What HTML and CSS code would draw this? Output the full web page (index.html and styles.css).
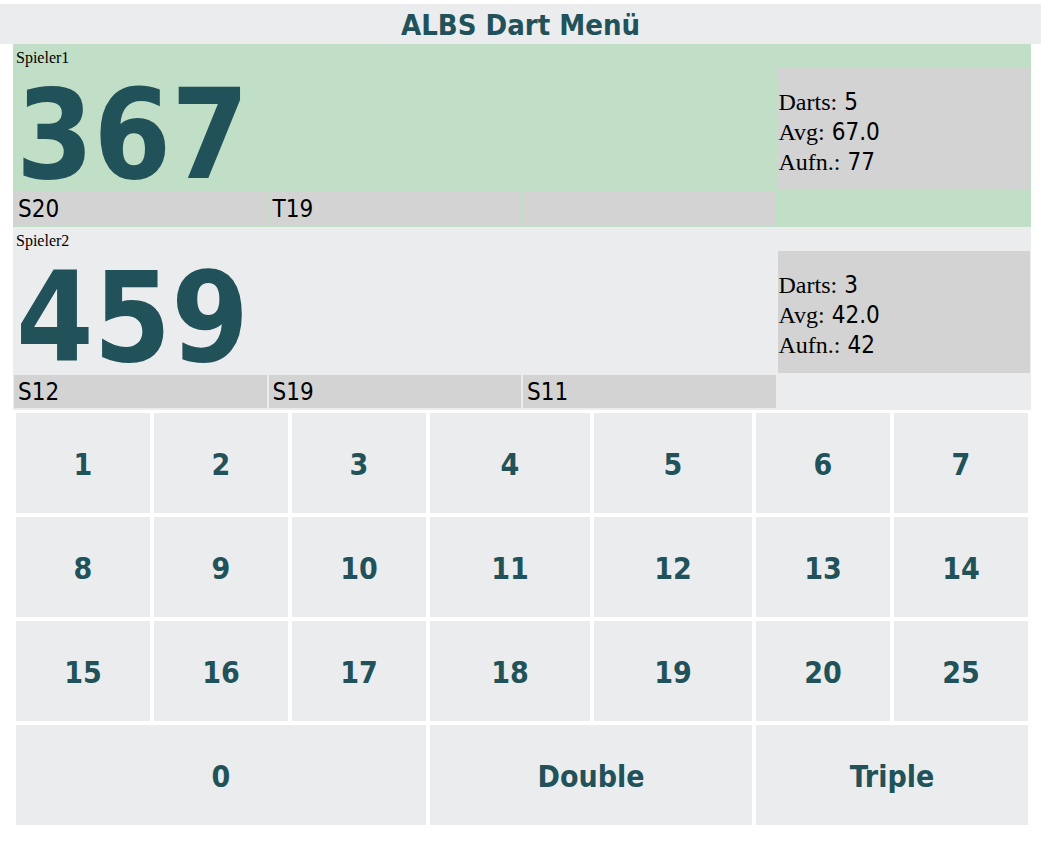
FILE: index.html
```html
<!DOCTYPE html>
<html lang="de">
<head>
<meta charset="utf-8">
<title>ALBS Dart Menü</title>
<link rel="stylesheet" href="styles.css">
</head>
<body>
<header class="title-bar"><h1 class="title">ALBS Dart Menü</h1></header>
<main class="board">
  <section class="player player-active">
    <div class="name">Spieler1</div>
    <div class="score">367</div>
    <div class="stats">
      <div class="stat"><span class="lbl">Darts:</span> <span class="val">5</span></div>
      <div class="stat"><span class="lbl">Avg:</span> <span class="val">67.0</span></div>
      <div class="stat"><span class="lbl">Aufn.:</span> <span class="val">77</span></div>
    </div>
    <div class="throw">S20</div>
    <div class="throw">T19</div>
    <div class="throw"></div>
  </section>
  <section class="player">
    <div class="name">Spieler2</div>
    <div class="score">459</div>
    <div class="stats">
      <div class="stat"><span class="lbl">Darts:</span> <span class="val">3</span></div>
      <div class="stat"><span class="lbl">Avg:</span> <span class="val">42.0</span></div>
      <div class="stat"><span class="lbl">Aufn.:</span> <span class="val">42</span></div>
    </div>
    <div class="throw">S12</div>
    <div class="throw">S19</div>
    <div class="throw">S11</div>
  </section>
  <section class="keypad">
    <button class="key">1</button>
    <button class="key">2</button>
    <button class="key">3</button>
    <button class="key">4</button>
    <button class="key">5</button>
    <button class="key">6</button>
    <button class="key">7</button>
    <button class="key">8</button>
    <button class="key">9</button>
    <button class="key">10</button>
    <button class="key">11</button>
    <button class="key">12</button>
    <button class="key">13</button>
    <button class="key">14</button>
    <button class="key">15</button>
    <button class="key">16</button>
    <button class="key">17</button>
    <button class="key">18</button>
    <button class="key">19</button>
    <button class="key">20</button>
    <button class="key">25</button>
    <button class="key key-zero">0</button>
    <button class="key key-wide">Double</button>
    <button class="key key-wide">Triple</button>
  </section>
</main>
</body>
</html>
```
FILE: styles.css
```css
html, body {
  margin: 0;
  padding: 0;
  background: #ffffff;
}

body {
  font-family: "Liberation Serif", serif;
  font-size: 16px;
  color: #000;
}

.title-bar {
  margin-top: 4px;
  height: 40px;
  background: #ebecee;
  display: flex;
  align-items: center;
  justify-content: center;
}

.title {
  margin: 0;
  padding-top: 3px;
  font-family: "DejaVu Sans Condensed", "DejaVu Sans", sans-serif;
  font-stretch: condensed;
  font-weight: bold;
  font-size: 29px;
  color: #225259;
  line-height: 37px;
}

.board {
  margin-left: 13px;
  width: 1018px;
}

.player {
  display: grid;
  grid-template-columns: repeat(4, 1fr);
  grid-template-rows: 21px 122px 33px;
  gap: 2px;
  padding: 1px 1px 2px 1px;
  background: #ebecee;
}

.player-active {
  background: #c1dfc6;
}

.name {
  grid-column: 1 / 4;
  grid-row: 1;
  font-size: 16px;
  line-height: 21px;
  padding-left: 2px;
  padding-top: 2px;
}

.score {
  grid-column: 1 / 4;
  grid-row: 2;
  font-family: "DejaVu Sans Condensed", "DejaVu Sans", sans-serif;
  font-stretch: condensed;
  font-weight: bold;
  font-size: 124px;
  line-height: 100px;
  color: #225259;
  padding-top: 17px;
  padding-left: 2px;
}

.stats {
  grid-column: 4;
  grid-row: 2;
  background: #d3d3d3;
  display: flex;
  flex-direction: column;
  justify-content: center;
  padding-left: 1px;
  padding-top: 5px;
}

.stat {
  height: 30px;
  line-height: 30px;
  white-space: nowrap;
}

.lbl {
  font-family: "Liberation Serif", serif;
  font-size: 24px;
}

.val {
  font-family: "DejaVu Sans Condensed", "DejaVu Sans", sans-serif;
  font-stretch: condensed;
  font-size: 24px;
  margin-left: 3px;
}

.throw {
  grid-row: 3;
  background: #d3d3d3;
  font-family: "DejaVu Sans Condensed", "DejaVu Sans", sans-serif;
  font-stretch: condensed;
  font-size: 24px;
  line-height: 34px;
  padding-left: 4px;
}

.keypad {
  display: grid;
  grid-template-columns: 134px 134px 134px 160px 158px 134px 134px;
  grid-auto-rows: 100px;
  gap: 4px;
  padding: 3px;
}

.key {
  border: none;
  margin: 0;
  padding: 2px 0 0 0;
  background: #ebecee;
  font-family: "DejaVu Sans Condensed", "DejaVu Sans", sans-serif;
  font-stretch: condensed;
  font-weight: bold;
  font-size: 30px;
  color: #225259;
}

.key-zero {
  grid-column: span 3;
}

.key-wide {
  grid-column: span 2;
}
```
